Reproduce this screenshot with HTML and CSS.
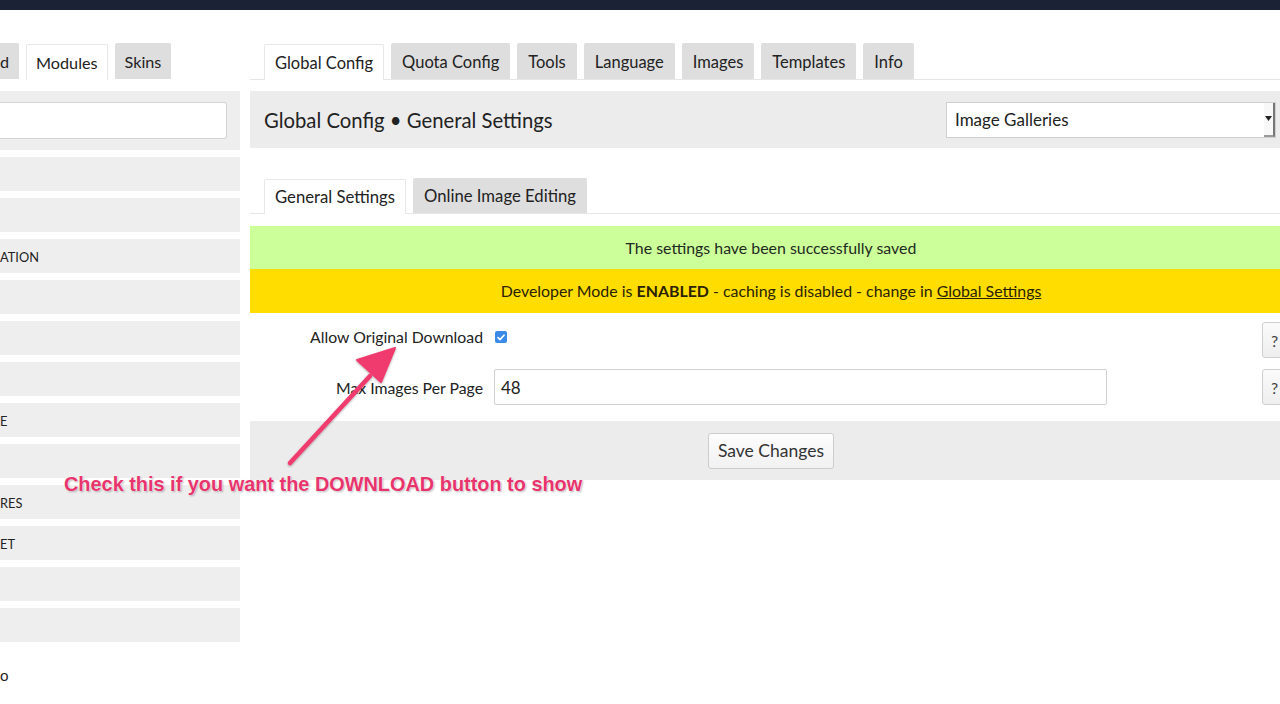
FILE: index.html
```html
<!DOCTYPE html>
<html>
<head>
<meta charset="utf-8">
<link rel="stylesheet" href="styles.css">
</head>
<body>
<div class="topbar"></div>
<div class="page">
  <aside class="left">
    <div class="tabs tabs-left">
      <div class="tab tab-cut">d</div>
      <div class="tab active">Modules</div>
      <div class="tab">Skins</div>
    </div>
    <div class="search-box"><div class="search-input"></div></div>
    <ul class="mod-list">
      <li></li>
      <li></li>
      <li>ATION</li>
      <li></li>
      <li></li>
      <li></li>
      <li>E</li>
      <li></li>
      <li>RES</li>
      <li>ET</li>
      <li></li>
      <li></li>
    </ul>
    <div class="left-foot">o</div>
  </aside>
  <main class="right">
    <div class="tabs tabs-line">
      <div class="tab active">Global Config</div>
      <div class="tab">Quota Config</div>
      <div class="tab">Tools</div>
      <div class="tab">Language</div>
      <div class="tab">Images</div>
      <div class="tab">Templates</div>
      <div class="tab">Info</div>
    </div>
    <div class="header">
      <h1 class="title">Global Config &bull; General Settings</h1>
      <div class="select">
        <span>Image Galleries</span>
        <span class="select-btn"><svg width="7" height="5" viewBox="0 0 7 5"><path d="M0 0H7L3.5 5Z" fill="#222"/></svg></span>
      </div>
    </div>
    <div class="subtabs">
      <div class="tab active">General Settings</div>
      <div class="tab">Online Image Editing</div>
    </div>
    <div class="msg msg-ok">The settings have been successfully saved</div>
    <div class="msg msg-warn">Developer Mode is <b>ENABLED</b> - caching is disabled - change in <a href="#">Global Settings</a></div>
    <div class="form">
      <div class="row">
        <label class="lbl lbl-top">Allow Original Download</label>
        <div class="ctrl"><span class="check"><svg width="8" height="7" viewBox="0 0 8 7"><path d="M1 3.6L3 5.6L7 1.2" fill="none" stroke="#fff" stroke-width="1.6" stroke-linecap="round" stroke-linejoin="round"/></svg></span></div>
        <div></div>
        <div class="help">?</div>
      </div>
      <div class="row">
        <label class="lbl">Max Images Per Page</label>
        <div class="ctrl"><div class="input">48</div></div>
        <div></div>
        <div class="help">?</div>
      </div>
    </div>
    <div class="footer"><div class="btn">Save Changes</div></div>
  </main>
</div>
<div class="annot">
  <svg class="arrow" width="140" height="140" viewBox="0 0 140 140">
    <defs>
      <filter id="sh" x="-20%" y="-20%" width="140%" height="140%">
        <feDropShadow dx="0" dy="1" stdDeviation="1.2" flood-color="#000" flood-opacity="0.35"/>
      </filter>
    </defs>
    <g filter="url(#sh)">
      <path d="M18 117 L98 30" stroke="#f03a6e" stroke-width="4.5" stroke-linecap="round"/>
      <path d="M123 2 L85 14 L109 36 Z" fill="#f03a6e" stroke="#f03a6e" stroke-width="2" stroke-linejoin="round"/>
    </g>
  </svg>
  <div class="annot-text">Check this if you want the DOWNLOAD button to show</div>
</div>
</body>
</html>
```
FILE: styles.css
```css
html, body {
  margin: 0;
  padding: 0;
  background: #fff;
  overflow: hidden;
  width: 1280px;
  height: 704px;
}
body {
  font-family: "Lato", "Noto Sans", sans-serif;
  color: #222;
  position: relative;
}
.topbar {
  height: 10px;
  background: #1b2236;
}
.page {
  display: flex;
  gap: 10px;
  width: 1292px;
  padding-top: 33px;
}
.left {
  width: 240px;
  flex: none;
}
.right {
  flex: 1;
  min-width: 0;
}
.tabs {
  display: flex;
  gap: 7px;
  height: 36px;
  align-items: stretch;
}
.tabs-line {
  border-bottom: 1px solid #e6e6e6;
  padding-left: 14px;
}
.tab {
  background: #dedede;
  font-size: 16.5px;
  padding: 0 10px;
  display: flex;
  align-items: center;
  border: 1px solid #dedede;
  border-bottom: none;
  border-radius: 2px 2px 0 0;
}
.tabs-left .tab {
  font-size: 16.2px;
  padding: 0 9px;
}
.tab.active {
  background: #fff;
  border-color: #e8e8e8;
  position: relative;
  top: 1px;
}
.tabs-left .tab-cut {
  padding: 0 9px 0 0;
  border-left: none;
  border-radius: 0 2px 0 0;
}
.search-box {
  margin-top: 12px;
  background: #eeeeee;
  height: 59px;
  padding: 11px 13px 0 0;
  box-sizing: border-box;
}
.search-input {
  height: 37px;
  background: #fff;
  border: 1px solid #d4d4d4;
  border-left: none;
  box-sizing: border-box;
  border-radius: 0 3px 3px 0;
}
.mod-list {
  list-style: none;
  margin: 7px 0 0;
  padding: 0;
  display: flex;
  flex-direction: column;
  gap: 7px;
}
.mod-list li {
  height: 34px;
  background: #eeeeee;
  font-size: 12.8px;
  line-height: 34px;
  padding-top: 1px;
  box-sizing: border-box;
}
.left-foot {
  margin-top: 24px;
  font-size: 15px;
}
.header {
  margin-top: 11px;
  height: 57px;
  background: #ececec;
  display: flex;
  align-items: center;
  justify-content: space-between;
  padding: 0 16px 0 14px;
}
.title {
  margin: 0;
  font-weight: 400;
  font-size: 20.3px;
}
.select {
  width: 330px;
  height: 36px;
  box-sizing: border-box;
  background: #fff;
  border: 1px solid #cfcfcf;
  display: flex;
  align-items: center;
  justify-content: space-between;
  padding-left: 8px;
  font-size: 17px;
}
.select-btn {
  width: 11px;
  height: 34px;
  display: flex;
  align-items: center;
  justify-content: center;
  border-right: 2px solid #777;
  border-bottom: 2px solid #999;
  box-sizing: border-box;
  background: #f8f8f8;
}
.subtabs {
  display: flex;
  gap: 7px;
  height: 35px;
  margin-top: 30px;
  padding-left: 14px;
  border-bottom: 1px solid #e6e6e6;
}
.subtabs .tab {
  font-size: 16.7px;
}
.msg {
  text-align: center;
  font-size: 15.9px;
}
.msg-ok {
  margin-top: 12px;
  height: 43px;
  line-height: 43px;
  background: #ccff99;
  color: #1d2a1d;
}
.msg-warn {
  height: 44px;
  line-height: 44px;
  background: #ffdd00;
  color: #2a2200;
}
.msg-warn a {
  color: #2a2200;
}
.form {
  padding-top: 9px;
  display: flex;
  flex-direction: column;
  gap: 11px;
}
.row {
  display: grid;
  grid-template-columns: 233px 613px 1fr 36px;
  column-gap: 11px;
  align-items: center;
  height: 36px;
}
.lbl {
  text-align: right;
  font-size: 15.8px;
}
.lbl-top {
  position: relative;
  top: -4px;
}
.ctrl {
  display: flex;
  align-items: center;
}
.check {
  width: 12px;
  height: 12px;
  border-radius: 2px;
  background: #3a8ae8;
  display: flex;
  align-items: center;
  justify-content: center;
  margin-left: 1px;
  margin-top: -6px;
}
.input {
  width: 613px;
  height: 36px;
  box-sizing: border-box;
  border: 1px solid #d0d0d0;
  border-radius: 2px;
  padding-left: 6px;
  font-size: 17px;
  display: flex;
  align-items: center;
}
.help {
  width: 36px;
  height: 36px;
  margin-left: 6px;
  box-sizing: border-box;
  border: 1px solid #cfcfcf;
  border-radius: 3px;
  background: linear-gradient(#fbfbfb, #eeeeee);
  display: flex;
  align-items: center;
  justify-content: flex-start;
  padding-left: 8px;
  font-size: 16px;
  color: #444;
}
.footer {
  margin-top: 16px;
  height: 59px;
  background: #ececec;
  display: flex;
  align-items: center;
  justify-content: center;
}
.btn {
  width: 126px;
  height: 36px;
  box-sizing: border-box;
  border: 1px solid #cdcdcd;
  border-radius: 3px;
  background: linear-gradient(#fdfdfd, #f1f1f1);
  display: flex;
  align-items: center;
  justify-content: center;
  font-size: 17.5px;
  color: #333;
}
.annot {
  position: absolute;
  left: 0;
  top: 0;
  width: 1280px;
  height: 704px;
  pointer-events: none;
}
.arrow {
  position: absolute;
  left: 272px;
  top: 346px;
}
.annot-text {
  position: absolute;
  left: 64px;
  top: 473px;
  font-family: "Liberation Sans", Arial, sans-serif;
  font-weight: 700;
  font-size: 19.9px;
  color: #e8346c;
  text-shadow: 0 0 1px #fff, 0 0 2px #fff, 1px 1px 2px rgba(0,0,0,0.35);
  white-space: nowrap;
}
```
